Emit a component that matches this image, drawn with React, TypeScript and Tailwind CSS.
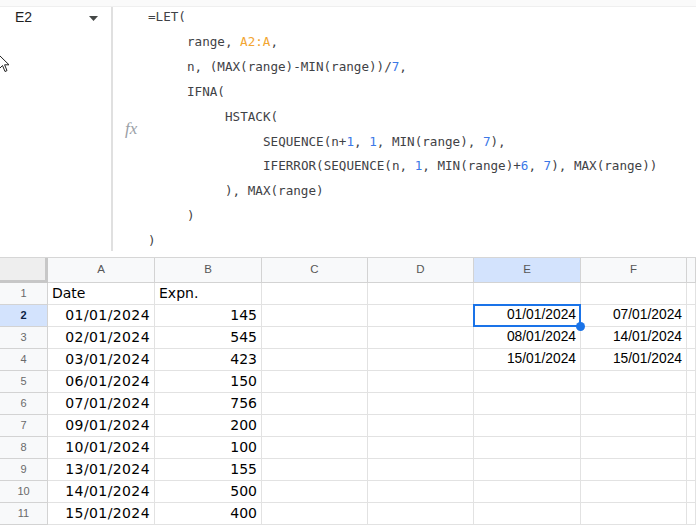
import React from 'react';

const mono = "font-['DejaVu_Sans_Mono',monospace]";

const B = ({ children }: { children: React.ReactNode }) => <span className="text-[#3b78e7]">{children}</span>;
const O = ({ children }: { children: React.ReactNode }) => <span className="text-[#f2a531]">{children}</span>;

const indent = ['pl-0', 'pl-[39px]', 'pl-[77px]', 'pl-[115px]'];

const formula: { level: number; content: React.ReactNode }[] = [
  { level: 0, content: '=LET(' },
  { level: 1, content: <>range, <O>A2:A</O>,</> },
  { level: 1, content: <>n, (MAX(range)-MIN(range))/<B>7</B>,</> },
  { level: 1, content: 'IFNA(' },
  { level: 2, content: 'HSTACK(' },
  { level: 3, content: <>SEQUENCE(n+<B>1</B>, <B>1</B>, MIN(range), <B>7</B>),</> },
  { level: 3, content: <>IFERROR(SEQUENCE(n, <B>1</B>, MIN(range)+<B>6</B>, <B>7</B>), MAX(range))</> },
  { level: 2, content: '), MAX(range)' },
  { level: 1, content: ')' },
  { level: 0, content: ')' },
];

const cols = ['A', 'B', 'C', 'D', 'E', 'F', ''];

const data: string[][] = [
  ['Date', 'Expn.', '', '', '', ''],
  ['01/01/2024', '145', '', '', '01/01/2024', '07/01/2024'],
  ['02/01/2024', '545', '', '', '08/01/2024', '14/01/2024'],
  ['03/01/2024', '423', '', '', '15/01/2024', '15/01/2024'],
  ['06/01/2024', '150', '', '', '', ''],
  ['07/01/2024', '756', '', '', '', ''],
  ['09/01/2024', '200', '', '', '', ''],
  ['10/01/2024', '100', '', '', '', ''],
  ['13/01/2024', '155', '', '', '', ''],
  ['14/01/2024', '500', '', '', '', ''],
  ['15/01/2024', '400', '', '', '', ''],
];

function FormulaBar() {
  return (
    <div className="relative flex h-[257px] flex-col">
      <div className="h-[7px] shrink-0 border-b border-[#efefef] bg-[#fafafa]" />
      <div className="flex min-h-0 flex-1">
        <div className="flex w-[111px] shrink-0 items-start justify-between pl-[15px] pr-[13px] pt-[2px]">
          <span className="font-['Liberation_Sans',Arial,sans-serif] text-[14px] leading-[17px] text-[#1f1f1f]">E2</span>
          <svg width="9" height="5" viewBox="0 0 9 5" className="mt-[7px]">
            <path d="M0 0 L9 0 L4.5 5 Z" fill="#444746" />
          </svg>
        </div>
        <div className="mb-[6px] w-[2px] shrink-0 bg-[#e0e0e0]" />
        <div className="flex w-[35px] shrink-0 items-center pb-[8px] pl-[12px]">
          <span className="font-['Liberation_Serif',serif] text-[17px] italic leading-none text-[#9aa0a6]">fx</span>
        </div>
        <div className={`${mono} -mt-[2px] text-[12.6px] leading-[24.9px] text-[#3f4246] whitespace-pre`}>
          {formula.map((l, i) => (
            <div key={i} className={indent[l.level]}>{l.content}</div>
          ))}
        </div>
      </div>
      <svg width="12" height="19" viewBox="0 0 12 19" className="absolute left-[-2px] top-[54px]">
        <path d="M1 1 L1 15 L4.5 11.5 L7 17.5 L9 16.6 L6.6 10.8 L11 10.8 Z" fill="#fff" stroke="#222" strokeWidth="1" strokeLinejoin="round" />
      </svg>
    </div>
  );
}

function Grid() {
  return (
    <div className="grid grid-cols-[48px_107px_107px_106px_106px_107px_106px_1fr] border-t border-[#d6d6d6]">
      <div className="h-[25px] border-b-[3px] border-r-[3px] border-[#c7c7c7] bg-[#eeeeee]" />
      {cols.map((c, i) => (
        <div
          key={i}
          className={`flex h-[25px] items-center justify-center border-b border-r border-[#d3d3d3] font-['Liberation_Sans',Arial,sans-serif] text-[11.5px] text-[#575757] ${
            c === 'E' ? 'bg-[#d3e3fd] text-[#1f1f1f]' : 'bg-[#f8f9fa]'
          }`}
        >
          {c}
        </div>
      ))}
      {data.map((row, r) => (
        <React.Fragment key={r}>
          <div
            className={`flex h-[22px] items-center justify-center border-b border-r border-[#d3d3d3] font-['Liberation_Sans',Arial,sans-serif] text-[11px] ${
              r === 1 ? 'bg-[#d3e3fd] font-bold text-[#0b1f44]' : 'bg-[#f8f9fa] text-[#6a6a6a]'
            }`}
          >
            {r + 1}
          </div>
          {[0, 1, 2, 3, 4, 5, 6].map((c) => {
            const v = row[c] ?? '';
            const left = r === 0;
            const ab = c < 2;
            const font = ab
              ? `font-['DejaVu_Sans',Verdana,sans-serif] text-[14px] ${c === 0 && !left ? 'tracking-[0.4px]' : ''}`
              : "font-['Liberation_Sans',Arial,sans-serif] text-[13.8px]";
            return (
              <div
                key={c}
                className={`relative flex h-[22px] items-center border-b border-r border-[#e2e2e2] text-black ${font} ${
                  left ? 'justify-start pl-[4px]' : 'justify-end pr-[4px]'
                } ${r === 1 && c === 4 ? 'z-10' : ''}`}
              >
                {v}
                {r === 1 && c === 4 && (
                  <>
                    <div className="absolute -left-px -top-px bottom-[-1px] right-[-1px] border-2 border-[#1a73e8]" />
                    <div className="absolute bottom-[-5px] right-[-5px] h-[9px] w-[9px] rounded-full bg-[#1a73e8]" />
                  </>
                )}
              </div>
            );
          })}
        </React.Fragment>
      ))}
    </div>
  );
}

export default function App() {
  return (
    <div className="h-[525px] w-[696px] overflow-hidden bg-white">
      <FormulaBar />
      <Grid />
    </div>
  );
}
